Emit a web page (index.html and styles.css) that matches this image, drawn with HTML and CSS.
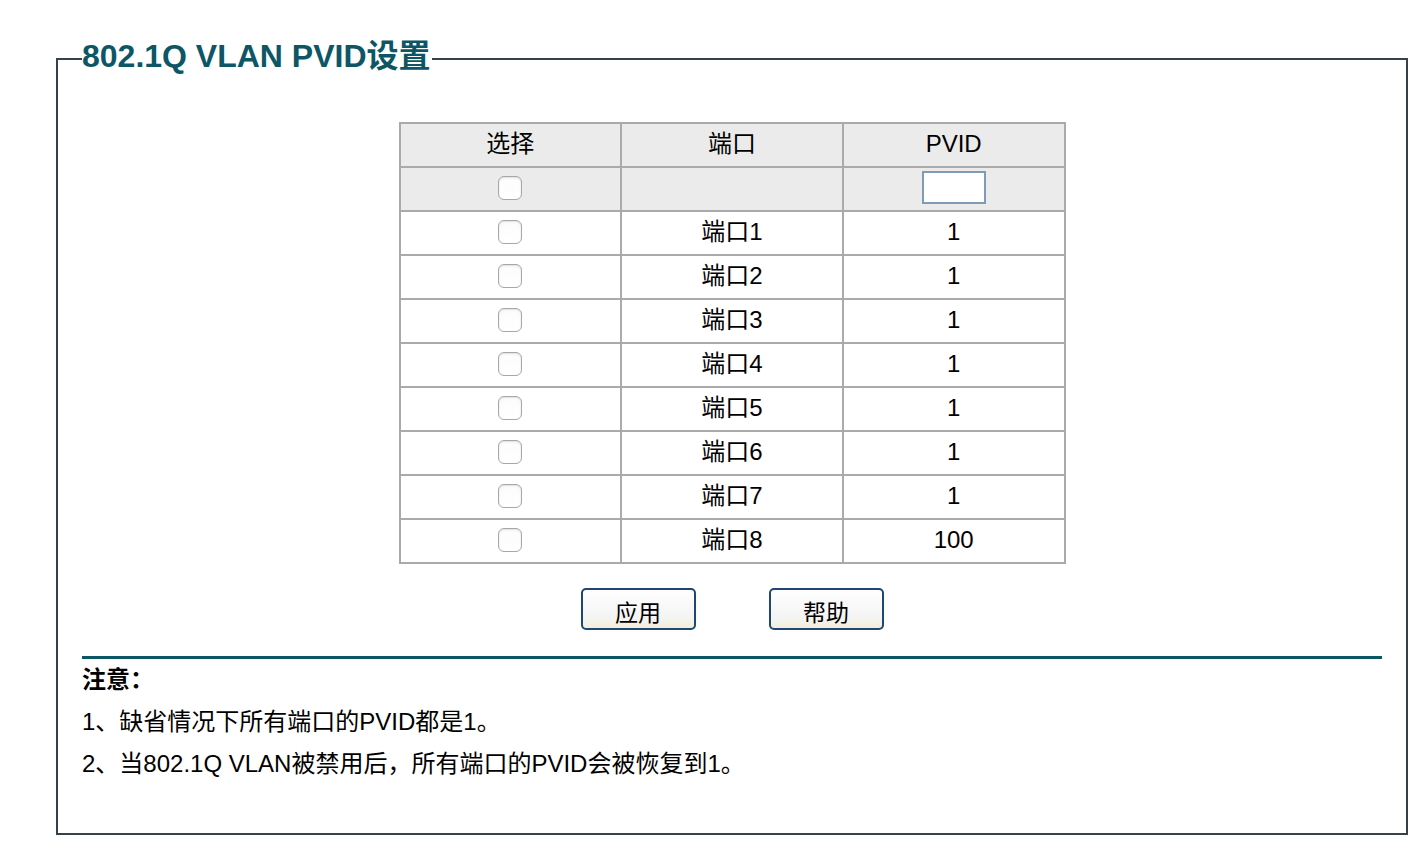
FILE: index.html
```html
<!DOCTYPE html>
<html lang="zh-CN">
<head>
<meta charset="utf-8">
<title>802.1Q VLAN PVID设置</title>
<link rel="stylesheet" href="styles.css">
</head>
<body>
<fieldset class="panel">
  <legend class="panel-title">802.1Q VLAN PVID设置</legend>
  <table class="pvid-table">
    <colgroup><col class="col"><col class="col"><col class="col"></colgroup>
    <tr class="head"><td>选择</td><td>端口</td><td>PVID</td></tr>
    <tr class="head"><td><input type="checkbox" class="chk"></td><td></td><td><input type="text" class="pvid-input"></td></tr>
    <tr><td><input type="checkbox" class="chk"></td><td>端口1</td><td>1</td></tr>
    <tr><td><input type="checkbox" class="chk"></td><td>端口2</td><td>1</td></tr>
    <tr><td><input type="checkbox" class="chk"></td><td>端口3</td><td>1</td></tr>
    <tr><td><input type="checkbox" class="chk"></td><td>端口4</td><td>1</td></tr>
    <tr><td><input type="checkbox" class="chk"></td><td>端口5</td><td>1</td></tr>
    <tr><td><input type="checkbox" class="chk"></td><td>端口6</td><td>1</td></tr>
    <tr><td><input type="checkbox" class="chk"></td><td>端口7</td><td>1</td></tr>
    <tr><td><input type="checkbox" class="chk"></td><td>端口8</td><td>100</td></tr>
  </table>
  <div class="buttons">
    <button class="btn" type="button">应用</button>
    <button class="btn" type="button">帮助</button>
  </div>
  <div class="divider"></div>
  <div class="notes">
    <div class="notes-title">注意：</div>
    <div class="note">1、缺省情况下所有端口的PVID都是1。</div>
    <div class="note">2、当802.1Q VLAN被禁用后，所有端口的PVID会被恢复到1。</div>
  </div>
</fieldset>
</body>
</html>
```

FILE: styles.css
```css
html, body {
  margin: 0;
  padding: 0;
  background: #fff;
}
body {
  font-family: "Liberation Sans", Arial, "Noto Sans CJK SC", sans-serif;
  color: #000;
}
.panel {
  margin: 38px 6px 0 56px;
  border: 2px solid #35424a;
  padding: 42px 0 48px 0;
  min-width: 0;
}
.panel-title {
  margin-left: 24px;
  padding: 0 1px 6px 0;
  font-size: 32px;
  line-height: 36px;
  font-weight: bold;
  color: #0d5665;
}
.pvid-table {
  margin: 0 auto;
  width: 667px;
  table-layout: fixed;
  border-collapse: separate;
  border-spacing: 0;
  border-top: 2px solid #aaaaaa;
  border-left: 2px solid #aaaaaa;
}
.pvid-table td {
  height: 44px;
  padding: 0 0 2px 0;
  box-sizing: border-box;
  border-right: 2px solid #aaaaaa;
  border-bottom: 2px solid #aaaaaa;
  text-align: center;
  vertical-align: middle;
  font-size: 24px;
  line-height: 28px;
}
.pvid-table tr.head td {
  background: #ebebeb;
}
.chk {
  appearance: none;
  -webkit-appearance: none;
  display: block;
  width: 24px;
  height: 24px;
  margin: 0 auto;
  border: 1px solid #a7a7a7;
  border-radius: 6px;
  background: linear-gradient(#fcfcfc, #ffffff);
  box-shadow: inset 0 1px 2px rgba(0,0,0,0.12);
}
.pvid-input {
  display: block;
  width: 64px;
  height: 33px;
  box-sizing: border-box;
  margin: -2px auto 0 auto;
  border: 2px solid #7f9bb5;
  background: #fff;
  padding: 0 4px;
  font-size: 20px;
}
.buttons {
  display: flex;
  justify-content: center;
  gap: 73px;
  margin-top: 24px;
}
.btn {
  width: 115px;
  height: 42px;
  box-sizing: border-box;
  border: 2px solid #1f4674;
  border-radius: 5px;
  background: linear-gradient(#ffffff 0%, #f4f4f4 70%, #f3efdc 100%);
  font-family: "Liberation Sans", "Noto Sans CJK SC", sans-serif;
  font-size: 23px;
  color: #000;
  padding: 8px 0 0 0;
  line-height: 28px;
}
.divider {
  margin: 26px 24px 0 24px;
  border-top: 3px solid #0d5665;
}
.notes {
  padding: 0 24px;
  font-size: 24px;
}
.notes-title {
  font-weight: bold;
  line-height: 42px;
}
.note {
  line-height: 42px;
}
```
